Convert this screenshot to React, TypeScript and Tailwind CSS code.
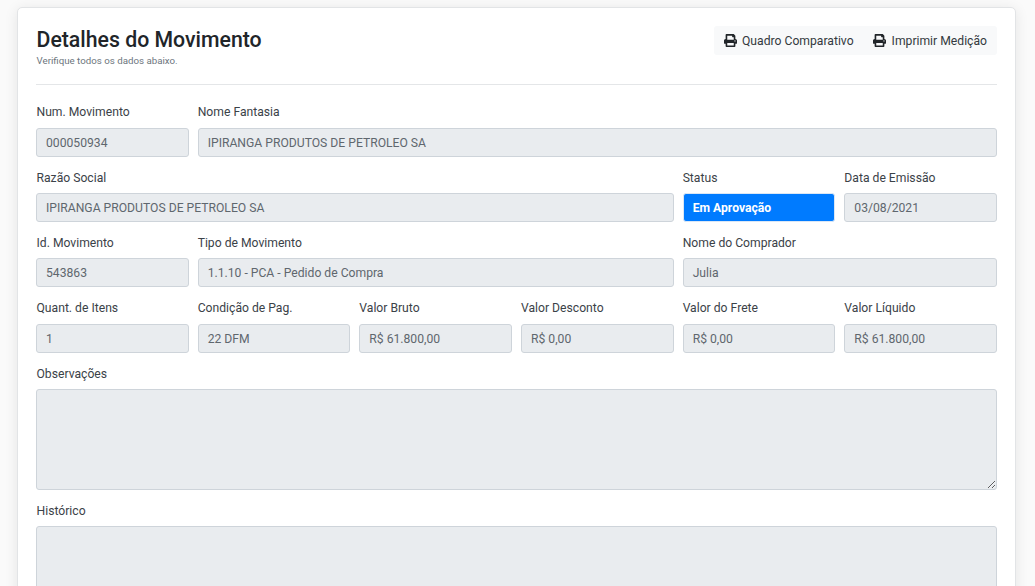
import { FaPrint } from "react-icons/fa";

type Field = {
  label: string;
  value: string;
  span: string;
  status?: boolean;
  first?: boolean;
};

const fields: Field[] = [
  { label: "Num. Movimento", value: "000050934", span: "col-span-1", first: true },
  { label: "Nome Fantasia", value: "IPIRANGA PRODUTOS DE PETROLEO SA", span: "col-span-5" },
  { label: "Razão Social", value: "IPIRANGA PRODUTOS DE PETROLEO SA", span: "col-span-4", first: true },
  { label: "Status", value: "Em Aprovação", span: "col-span-1", status: true },
  { label: "Data de Emissão", value: "03/08/2021", span: "col-span-1" },
  { label: "Id. Movimento", value: "543863", span: "col-span-1", first: true },
  { label: "Tipo de Movimento", value: "1.1.10 - PCA - Pedido de Compra", span: "col-span-3" },
  { label: "Nome do Comprador", value: "Julia", span: "col-span-2" },
  { label: "Quant. de Itens", value: "1", span: "col-span-1", first: true },
  { label: "Condição de Pag.", value: "22 DFM", span: "col-span-1" },
  { label: "Valor Bruto", value: "R$ 61.800,00", span: "col-span-1" },
  { label: "Valor Desconto", value: "R$ 0,00", span: "col-span-1" },
  { label: "Valor do Frete", value: "R$ 0,00", span: "col-span-1" },
  { label: "Valor Líquido", value: "R$ 61.800,00", span: "col-span-1" },
];

function FieldBox({ field }: { field: Field }) {
  return (
    <div className={field.span}>
      <label
        className={`mb-[7.2px] block h-[15px] text-[12.16px] leading-[15px] text-[#3b4248] ${
          field.first ? "pl-[0.5px]" : ""
        }`}
      >
        {field.label}
      </label>
      <div
        className={`flex h-[29px] items-center rounded-[3px] border px-[9px] pt-[1.2px] text-[12.16px] ${
          field.status
            ? "border-[#dbe7f5] bg-[#007bff] font-bold text-white"
            : "border-[#ced4da] bg-[#e9ecef] text-[#5f676e]"
        }`}
      >
        {field.value}
      </div>
    </div>
  );
}

export default function App() {
  return (
    <div className="h-[586px] overflow-hidden bg-[#fafafa] pl-[17px] pr-[19px] pt-[7px] font-['Roboto',sans-serif]">
      <div className="h-[700px] rounded-[5px] border border-[#e2e4e6] bg-white px-[18px] pt-[18px] shadow-[0_2px_14px_rgba(0,0,0,0.09)]">
        <div className="flex items-start justify-between border-b border-[#e4e6e8] pb-[17px]">
          <div className="pl-[0.5px]">
            <h1 className="pt-px text-[21.28px] font-medium leading-[26px] text-[#212529]">Detalhes do Movimento</h1>
            <p className="mt-[2px] text-[9.73px] leading-[12px] text-[#6c757d]">Verifique todos os dados abaixo.</p>
          </div>
          <div className="flex h-[29px] items-center rounded-[3px] bg-[#f8f9fa] px-[10px] text-[12.16px] text-[#343a40]">
            <button className="flex items-center gap-[5px]">
              <FaPrint className="h-[13px] w-[13px] text-[#212529]" />
              <span className="pt-px">Quadro Comparativo</span>
            </button>
            <button className="ml-[19px] flex items-center gap-[6px]">
              <FaPrint className="h-[13px] w-[13px] text-[#212529]" />
              <span className="pt-px">Imprimir Medição</span>
            </button>
          </div>
        </div>

        <div className="mt-[20.4px] grid grid-cols-6 gap-x-[9px] gap-y-[14.15px]">
          {fields.map((f) => (
            <FieldBox key={f.label} field={f} />
          ))}
          <div className="col-span-6">
            <label className="mb-[7.2px] block h-[15px] pl-[0.5px] text-[12.16px] leading-[15px] text-[#3b4248]">
              Observações
            </label>
            <textarea
              disabled
              className="block h-[101px] w-full resize-y rounded-[3px] border border-[#ced4da] bg-[#e9ecef]"
            />
          </div>
          <div className="col-span-6">
            <label className="mb-[7.2px] block h-[15px] pl-[0.5px] text-[12.16px] leading-[15px] text-[#3b4248]">
              Histórico
            </label>
            <textarea
              disabled
              className="block h-[101px] w-full resize-y rounded-[3px] border border-[#ced4da] bg-[#e9ecef]"
            />
          </div>
        </div>
      </div>
    </div>
  );
}
